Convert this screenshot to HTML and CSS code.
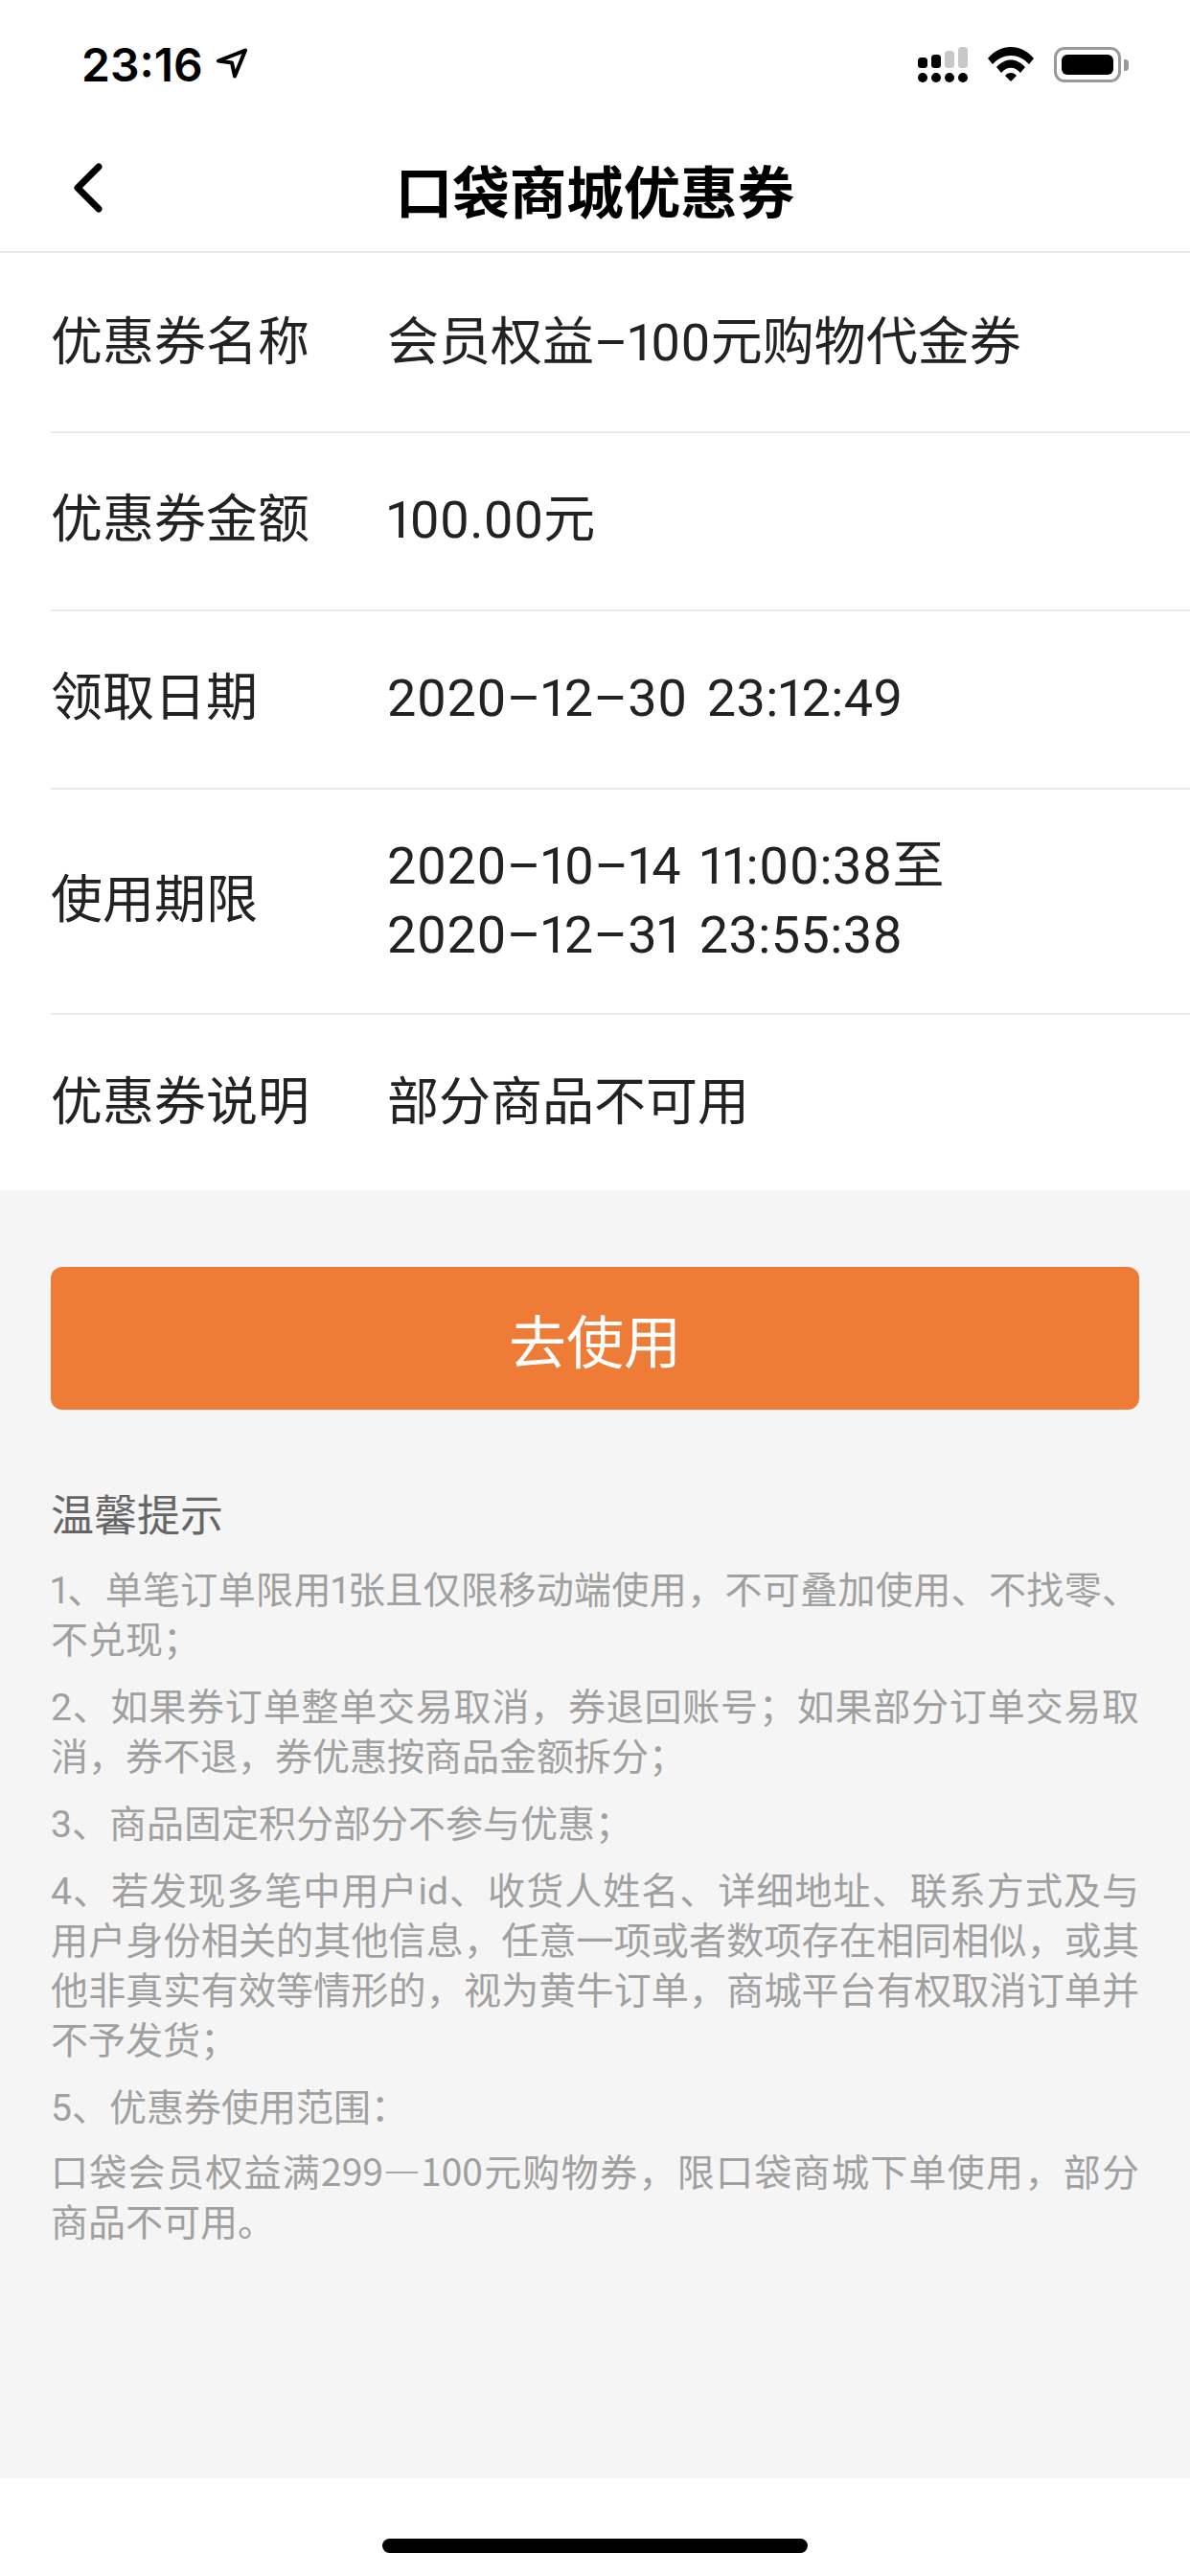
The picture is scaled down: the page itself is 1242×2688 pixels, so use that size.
FILE: index.html
```html
<!DOCTYPE html>
<html lang="zh-CN">
<head>
    <meta charset="UTF-8">
    <meta name="viewport" content="width=device-width, initial-scale=1.0">
    <title>口袋商城优惠券</title>
    <link rel="stylesheet" href="styles.css">
</head>
<body>
    <div class="page">
        <div class="status-bar">
            <div class="status-left">
                <span class="time">23:16</span>
                <svg class="location" width="34" height="32" viewBox="0 0 34 32">
                    <path d="M3 13.5 L31 2.5 L20 29.5 L17 15.5 Z" fill="none" stroke="#000" stroke-width="4" stroke-linejoin="round"/>
                </svg>
            </div>
            <div class="status-right">
                <svg width="52" height="37" viewBox="0 0 52 37">
                    <rect x="0" y="11" width="10" height="11" rx="3.5" fill="#000"/>
                    <rect x="14" y="8" width="10" height="14" rx="3.5" fill="#000"/>
                    <rect x="28" y="4" width="10" height="18" rx="3.5" fill="#c8c8c8"/>
                    <rect x="42" y="0" width="10" height="22" rx="3.5" fill="#c8c8c8"/>
                    <circle cx="5" cy="32" r="5" fill="#000"/>
                    <circle cx="19" cy="32" r="5" fill="#000"/>
                    <circle cx="33" cy="32" r="5" fill="#000"/>
                    <circle cx="47" cy="32" r="5" fill="#000"/>
                </svg>
                <svg class="wifi" width="48" height="36" viewBox="0 0 48 36">
                    <path d="M0 12 C13 -4 35 -4 48 12 L43 18 C32 6 16 6 5 18 Z" fill="#000"/>
                    <path d="M9 21 C18 11 30 11 39 21 L34 27 C28 20 20 20 14 27 Z" fill="#000"/>
                    <path d="M18 30 C21 26 27 26 30 30 L24 36 Z" fill="#000"/>
                </svg>
                <div class="battery">
                    <div class="battery-body"><div class="battery-fill"></div></div>
                    <div class="battery-nub"></div>
                </div>
            </div>
        </div>

        <div class="nav">
            <svg class="back" width="36" height="52" viewBox="0 0 36 52">
                <path d="M29 4 L7 26 L29 48" fill="none" stroke="#000" stroke-width="7" stroke-linecap="round" stroke-linejoin="round"/>
            </svg>
            <h1 class="nav-title">口袋商城优惠券</h1>
        </div>

        <div class="info">
            <div class="info-row">
                <div class="info-label">优惠券名称</div>
                <div class="info-value">会员权益–100元购物代金券</div>
            </div>
            <div class="info-row">
                <div class="info-label">优惠券金额</div>
                <div class="info-value">100.00元</div>
            </div>
            <div class="info-row">
                <div class="info-label">领取日期</div>
                <div class="info-value date">2020–12–30 23:12:49</div>
            </div>
            <div class="info-row">
                <div class="info-label">使用期限</div>
                <div class="info-value date">2020–10–14 11:00:38至<br>2020–12–31 23:55:38</div>
            </div>
            <div class="info-row">
                <div class="info-label">优惠券说明</div>
                <div class="info-value">部分商品不可用</div>
            </div>
        </div>

        <div class="content">
            <button class="use-btn">去使用</button>
            <div class="tips">
                <h2 class="tips-title">温馨提示</h2>
                <p>1、单笔订单限用1张且仅限移动端使用，不可叠加使用、不找零、不兑现；</p>
                <p>2、如果券订单整单交易取消，券退回账号；如果部分订单交易取消，券不退，券优惠按商品金额拆分；</p>
                <p>3、商品固定积分部分不参与优惠；</p>
                <p>4、若发现多笔中用户id、收货人姓名、详细地址、联系方式及与用户身份相关的其他信息，任意一项或者数项存在相同相似，或其他非真实有效等情形的，视为黄牛订单，商城平台有权取消订单并不予发货；</p>
                <p>5、优惠券使用范围：</p>
                <p class="scope">口袋会员权益满299—100元购物券，限口袋商城下单使用，部分商品不可用。</p>
            </div>
        </div>

        <div class="home-bar">
            <div class="home-indicator"></div>
        </div>
    </div>
</body>
</html>
```

FILE: styles.css
```css
* {
    margin: 0;
    padding: 0;
    box-sizing: border-box;
}

body {
    font-family: "Roboto", "Noto Sans CJK SC", sans-serif;
    font-variant-numeric: proportional-nums;
    background: #fff;
    color: #222;
}

.page {
    width: 1242px;
    height: 2688px;
    display: flex;
    flex-direction: column;
    overflow: hidden;
}

.status-bar {
    height: 132px;
    padding: 49px 64px 0 85px;
    display: flex;
    justify-content: space-between;
    align-items: flex-start;
}

.status-left {
    display: flex;
    align-items: center;
    gap: 13px;
}

.time {
    font-family: "Inter", sans-serif;
    font-size: 48px;
    font-weight: 600;
    line-height: 37px;
    color: #000;
}

.location {
    margin-top: -3px;
}

.status-right {
    display: flex;
    align-items: flex-start;
    gap: 21px;
}

.battery {
    display: flex;
    align-items: center;
    gap: 3px;
    height: 37px;
}

.battery-body {
    width: 70px;
    height: 37px;
    padding: 5px;
    border: 3px solid #999;
    border-radius: 11px;
}

.battery-fill {
    height: 100%;
    background: #000;
    border-radius: 6px;
}

.battery-nub {
    width: 5px;
    height: 12px;
    background: #999;
    border-radius: 0 4px 4px 0;
}

.nav {
    height: 132px;
    position: relative;
    display: flex;
    align-items: center;
    justify-content: center;
    border-bottom: 2px solid #e8e8e8;
}

.back {
    position: absolute;
    left: 74px;
    top: 38px;
}

.nav-title {
    font-size: 59.5px;
    font-weight: 700;
    color: #000;
}

.info {
    background: #fff;
    padding-left: 53px;
}

.info-row {
    min-height: 186px;
    padding-bottom: 2px;
    display: flex;
    align-items: center;
    border-top: 2px solid #eaeaea;
    font-size: 54px;
    line-height: 72px;
}

.info-row:first-child {
    border-top: 0;
    padding: 2px 0 0;
}

.info-row:nth-child(4) {
    min-height: 235px;
}

.info-row:last-child {
    min-height: 185px;
    padding-bottom: 0;
}

.info-label {
    width: 351px;
    flex-shrink: 0;
}

.info-value {
    word-spacing: 4px;
}

.info-value.date {
    letter-spacing: 0.4px;
    word-spacing: 6px;
}

.content {
    flex: 1;
    background: #f5f5f5;
    padding: 80px 53px 0;
}

.use-btn {
    display: block;
    width: 100%;
    height: 149px;
    background: #ee7b36;
    color: #fff;
    border: 0;
    border-radius: 12px;
    font-family: inherit;
    font-size: 60px;
}

.tips {
    margin-top: 86px;
    color: #a0a0a0;
    font-size: 39px;
    line-height: 52px;
    text-align: justify;
}

.tips-title {
    font-size: 45px;
    font-weight: 400;
    line-height: 52px;
    color: #666;
    margin-bottom: 25px;
}

.tips p {
    margin-bottom: 18px;
}

/* the long dash here comes from the CJK font, Roboto's is too short */
.tips .scope {
    font-family: "Noto Sans CJK SC", sans-serif;
    margin-top: -6px;
}

.home-bar {
    height: 102px;
    background: #fff;
    display: flex;
    justify-content: center;
    padding-top: 63px;
}

.home-indicator {
    width: 444px;
    height: 15px;
    background: #000;
    border-radius: 8px;
}
```
